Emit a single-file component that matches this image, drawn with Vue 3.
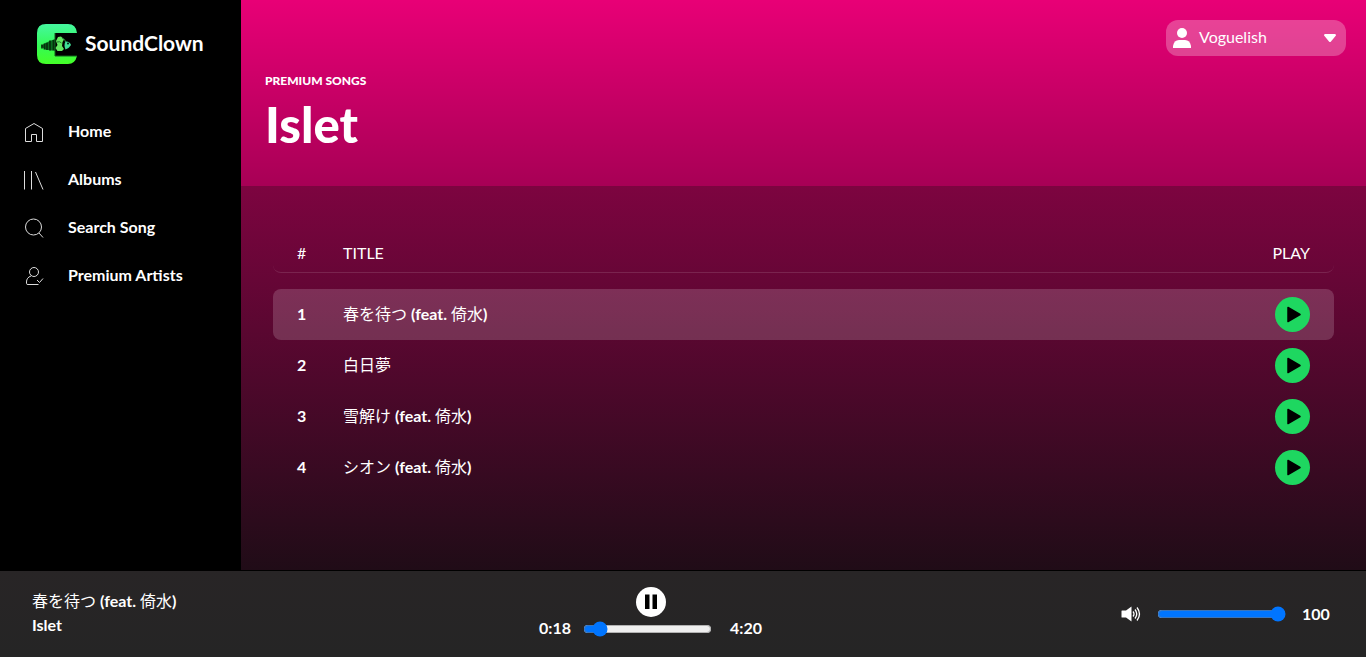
<script setup>
import { ref } from 'vue'

const songs = [
  [{ t: '春を待つ', jp: true }, { t: ' (feat. ' }, { t: '倚水', jp: true }, { t: ')' }],
  [{ t: '白日夢', jp: true }],
  [{ t: '雪解け', jp: true }, { t: ' (feat. ' }, { t: '倚水', jp: true }, { t: ')' }],
  [{ t: 'シオン', jp: true }, { t: ' (feat. ' }, { t: '倚水', jp: true }, { t: ')' }]
]
const current = ref(0)
const position = ref(20)
const volume = ref(100)
</script>

<template>
  <div class="app">
    <div class="body">
      <aside class="sidebar">
        <a class="brand" href="#">
          <svg class="logo" viewBox="0 0 40 40" aria-hidden="true">
            <defs>
              <linearGradient id="lg" x1="0" y1="0" x2="0" y2="1">
                <stop offset="0" stop-color="#45f7a0" />
                <stop offset=".55" stop-color="#35fb55" />
                <stop offset="1" stop-color="#45ff28" />
              </linearGradient>
            </defs>
            <path d="M9 0H31Q39 0 40 9H18V32H40Q38 40 31 40H9Q0 40 0 31V9Q0 0 9 0Z" fill="url(#lg)" />
            <path d="M18 9V32H40" fill="none" stroke="#12601c" />
            <path d="M4 22Q9 18 13 17L18 15V27L8 25.500Z" fill="#0b6a20" />
            <path d="M5 20.500v4M7.500 19.500v6M10 19v7M13 16.500v10M16.500 16v10" stroke="#05300c" stroke-width="1.700" />
            <path d="M19 17L21 13L24 12.500L27 15.500L25.500 18L25 22L27 25L25 27L20.500 27L18.500 24L20.500 21Z" fill="#62e860" />
            <path d="M20 18Q23 17 24.500 19" fill="none" stroke="#1c7a2c" />
            <path d="M25 14Q28.500 15 28.500 18" fill="none" stroke="#2c8a40" />
            <path d="M28.500 17.500Q32.500 17 34 21Q32 24.500 28.500 25.500Q26.500 21 28.500 17.500Z" fill="#3fdf96" />
            <circle cx="31" cy="19.500" r="1" fill="#041f14" />
          </svg>
          <span>SoundClown</span>
        </a>
        <nav class="nav">
          <a href="#">
            <svg viewBox="0 0 24 24" aria-hidden="true"><path d="M3.500 21.500V8.500L12 3.500l8.500 5v13h-6v-7h-5v7z" /></svg>
            <span>Home</span>
          </a>
          <a href="#">
            <svg viewBox="0 0 24 24" aria-hidden="true"><path d="M2.500 3v18.500M9.500 3v18.500M13.500 4l7.500 17.500" /></svg>
            <span>Albums</span>
          </a>
          <a href="#">
            <svg viewBox="0 0 24 24" aria-hidden="true"><circle cx="11.500" cy="11" r="8" /><path d="M17 17l4 4.500" /></svg>
            <span>Search Song</span>
          </a>
          <a href="#">
            <svg viewBox="0 0 24 24" aria-hidden="true"><circle cx="12" cy="8" r="4.500" /><path d="M9 12Q4.500 13.500 4.500 18V19.500Q4.500 20.500 6 20.500H16.500M15 16l2.500 2.500L21 14.500" /></svg>
            <span>Premium Artists</span>
          </a>
        </nav>
      </aside>

      <main class="main">
        <header class="hero">
          <button class="user" type="button">
            <svg class="person" viewBox="0 0 18 20" aria-hidden="true"><circle cx="9" cy="5" r="5" /><path d="M0 20v-2q1-6 6-6h6q5 0 6 6v2z" /></svg>
            <span>Voguelish</span>
            <svg class="caret" viewBox="0 0 12 8" aria-hidden="true"><path d="M1 0h10q1.500.5.7 1.800L7 7.500q-1 1-2 0L.3 1.800Q-.5.5 1 0z" /></svg>
          </button>
          <p class="kind">PREMIUM SONGS</p>
          <h1>Islet</h1>
        </header>

        <section class="content">
          <table>
            <thead>
              <tr><th class="num">#</th><th>TITLE</th><th class="play">PLAY</th></tr>
            </thead>
            <tbody>
              <tr v-for="(song, i) in songs" :key="i" :class="{ active: i === current }">
                <td class="num">{{ i + 1 }}</td>
                <td class="title"><span v-for="(part, k) in song" :key="k" :class="{ jp: part.jp }">{{ part.t }}</span></td>
                <td class="play">
                  <button class="play-btn" type="button" :aria-label="'Play song ' + (i + 1)" @click="current = i">
                    <svg viewBox="0 0 35 35" aria-hidden="true"><path d="M13 10.500L25 17.500 13 24.500z" stroke="#000" stroke-width="1.500" stroke-linejoin="round" /></svg>
                  </button>
                </td>
              </tr>
            </tbody>
          </table>
        </section>
      </main>
    </div>

    <footer class="player">
      <div class="now">
        <div><span v-for="(part, k) in songs[current]" :key="k" :class="{ jp: part.jp }">{{ part.t }}</span></div>
        <div>Islet</div>
      </div>
      <div class="controls">
        <button class="pause" type="button" aria-label="Pause">
          <svg viewBox="0 0 30 30" aria-hidden="true"><path d="M9 7.500h4.500v14.500H9zM16.500 7.500H21v14.500h-4.500z" /></svg>
        </button>
        <div class="seek">
          <span class="time">0:18</span>
          <input v-model="position" type="range" min="0" max="260" aria-label="Position">
          <span class="time end">4:20</span>
        </div>
      </div>
      <div class="volume">
        <svg viewBox="0 0 20 16" aria-hidden="true">
          <path d="M1 4.500h4L10.500.5v15L5 11.500H1q-.5 0-.5-.5V5q0-.5.5-.5z" fill="#fff" />
          <path d="M12 5.500q2 2.500 0 5M14 3.500q3.500 4.500 0 9M16 1.500q5 6.500 0 13" fill="none" stroke="#fff" stroke-width="1.300" />
        </svg>
        <input v-model="volume" type="range" min="0" max="100" aria-label="Volume">
        <span>{{ volume }}</span>
      </div>
    </footer>
  </div>
</template>

<style>
body {
  margin: 0;
  background: #000;
}
</style>

<style scoped>
.app {
  display: flex;
  flex-direction: column;
  height: 100vh;
  color: #fff;
  font: 700 16px/24px Lato, "Noto Sans CJK JP", sans-serif;
}
.app * { box-sizing: border-box; }
.jp {
  font-family: "Noto Sans CJK JP", sans-serif;
  font-weight: 400;
}
a { color: inherit; text-decoration: none; }
button { font: inherit; color: inherit; border: 0; padding: 0; cursor: pointer; }
.body {
  display: flex;
  flex: 1;
  min-height: 0;
}
.sidebar {
  width: 241px;
  flex: none;
  background: #000;
}
.brand {
  display: flex;
  align-items: center;
  gap: 8px;
  padding: 24px 36px 0 37px;
  font-size: 21px;
}
.brand span,
.nav span,
.user span { padding-bottom: 2px; }
.logo { width: 40px; height: 40px; }
.nav {
  display: flex;
  flex-direction: column;
  padding: 44px 22px;
}
.nav a {
  display: flex;
  align-items: center;
  gap: 22px;
  height: 48px;
}
.nav svg {
  width: 24px;
  height: 24px;
  fill: none;
  stroke: #ddd;
}
.main {
  flex: 1;
  min-width: 0;
  display: flex;
  flex-direction: column;
  background: #e80076;
}
.hero {
  position: relative;
  height: 186px;
  flex: none;
  padding: 69px 24px 0;
  background: linear-gradient(transparent, rgba(0, 0, 0, .28));
}
.kind {
  margin: 0;
  font-size: 12px;
  font-weight: 900;
}
h1 {
  margin: 1px 0 0;
  font-size: 49px;
  line-height: 60px;
  font-weight: 900;
}
.user {
  position: absolute;
  top: 20px;
  right: 20px;
  display: flex;
  align-items: center;
  gap: 8px;
  width: 180px;
  height: 36px;
  padding: 0 10px 0 7px;
  border-radius: 12px;
  background: rgba(255, 255, 255, .26);
  font-weight: 400;
}
.user svg { fill: #fff; }
.person { width: 18px; height: 20px; }
.caret { width: 12px; height: 8px; margin-left: auto; }
.content {
  flex: 1;
  padding: 48px 32px 0;
  background: linear-gradient(#7d0440, #200c17);
}
table {
  width: 100%;
  border-collapse: separate;
  border-spacing: 0;
}
th {
  height: 39px;
  padding: 0;
  text-align: left;
  font-weight: 400;
  border-bottom: 1px solid rgba(255, 255, 255, .12);
}
th:first-child { border-bottom-left-radius: 8px; }
th:last-child { border-bottom-right-radius: 8px; }
tbody::before {
  content: "";
  display: block;
  height: 16px;
}
td { height: 51px; padding: 0 0 2px; }
.active td { background: rgba(255, 255, 255, .17); }
.active td:first-child { border-radius: 8px 0 0 8px; }
.active td:last-child { border-radius: 0 8px 8px 0; }
.num { width: 70px; padding-left: 24px; }
.play {
  width: 100px;
  padding-right: 24px;
  padding-bottom: 0;
  text-align: right;
}
.play-btn {
  width: 35px;
  height: 35px;
  border-radius: 50%;
  background: #1ed760;
  vertical-align: middle;
}
.play-btn svg { display: block; }
.player {
  display: flex;
  justify-content: space-between;
  align-items: center;
  height: 87px;
  padding: 0 32px;
  border-top: 1px solid #000;
  background: linear-gradient(#282526, #252525);
}
.now {
  min-width: 148px;
  padding-bottom: 3px;
}
.controls {
  display: flex;
  flex-direction: column;
  align-items: center;
}
.pause {
  width: 30px;
  height: 30px;
  border-radius: 50%;
  background: #fff;
}
.pause svg { display: block; }
.seek {
  display: flex;
  align-items: center;
}
.time {
  width: 42px;
  padding-bottom: 2px;
  line-height: 22px;
}
.end { width: 48px; text-align: right; }
input { width: 129px; margin: 2px; }
.volume {
  display: flex;
  align-items: center;
  justify-content: flex-end;
}
.volume svg { width: 20px; height: 16px; margin-right: 14px; }
.volume span { margin-left: 14px; width: 32px; }
</style>
